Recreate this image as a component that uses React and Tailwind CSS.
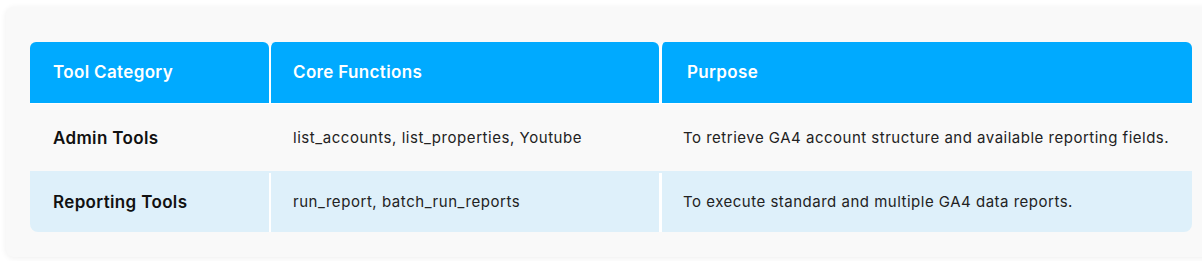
import React from 'react';

const rows = [
  {
    category: 'Admin Tools',
    functions: 'list_accounts, list_properties, Youtube',
    purpose: 'To retrieve GA4 account structure and available reporting fields.',
  },
  {
    category: 'Reporting Tools',
    functions: 'run_report, batch_run_reports',
    purpose: 'To execute standard and multiple GA4 data reports.',
  },
];

export default function App() {
  return (
    <div className="w-[1202px] h-[261px] overflow-hidden bg-white pt-[7px] pl-[6px] font-['Inter',sans-serif]">
      <div className="w-[1220px] h-[250px] rounded-lg bg-[#f9f9f9] shadow-[0_1px_6px_rgba(0,0,0,0.07)] pt-[35px] pl-[24px]">
        {/* Header */}
        <div className="flex w-[1162px] h-[62px] border-b border-white text-white text-[17px] font-semibold tracking-[0.35px]">
          <div className="w-[239px] shrink-0 flex items-center pl-[23px] pt-[1px] rounded-t-md bg-[#00aaff]">
            Tool Category
          </div>
          <div className="w-[390px] shrink-0 flex items-center pl-[22px] pt-[1px] rounded-t-md bg-[#00aaff] border-l-2 border-white">
            Core Functions
          </div>
          <div className="flex-1 flex items-center pl-[25px] pt-[1px] rounded-t-md bg-[#00aaff] border-l-[3px] border-white">
            Purpose
          </div>
        </div>

        {/* Rows */}
        {rows.map((r, i) => {
          const last = i === rows.length - 1;
          return (
            <div
              key={r.category}
              className={`flex w-[1162px] pt-[2px] ${last ? 'h-[61px] bg-[#def0fa] rounded-b-lg' : 'h-[67px]'}`}
            >
              <div className="w-[239px] shrink-0 flex items-center pl-[23px] text-[17px] font-semibold tracking-[0.35px] text-[#111]">
                {r.category}
              </div>
              <div className={`w-[390px] shrink-0 flex items-center pl-[22px] text-[15px] tracking-[0.55px] text-[#222] border-l-2 ${last ? 'border-white' : 'border-transparent'}`}>
                {r.functions}
              </div>
              <div className={`flex-1 flex items-center pl-[21px] text-[15px] tracking-[0.5px] text-[#222] border-l-[3px] ${last ? 'border-white' : 'border-transparent'}`}>
                {r.purpose}
              </div>
            </div>
          );
        })}
      </div>
    </div>
  );
}
